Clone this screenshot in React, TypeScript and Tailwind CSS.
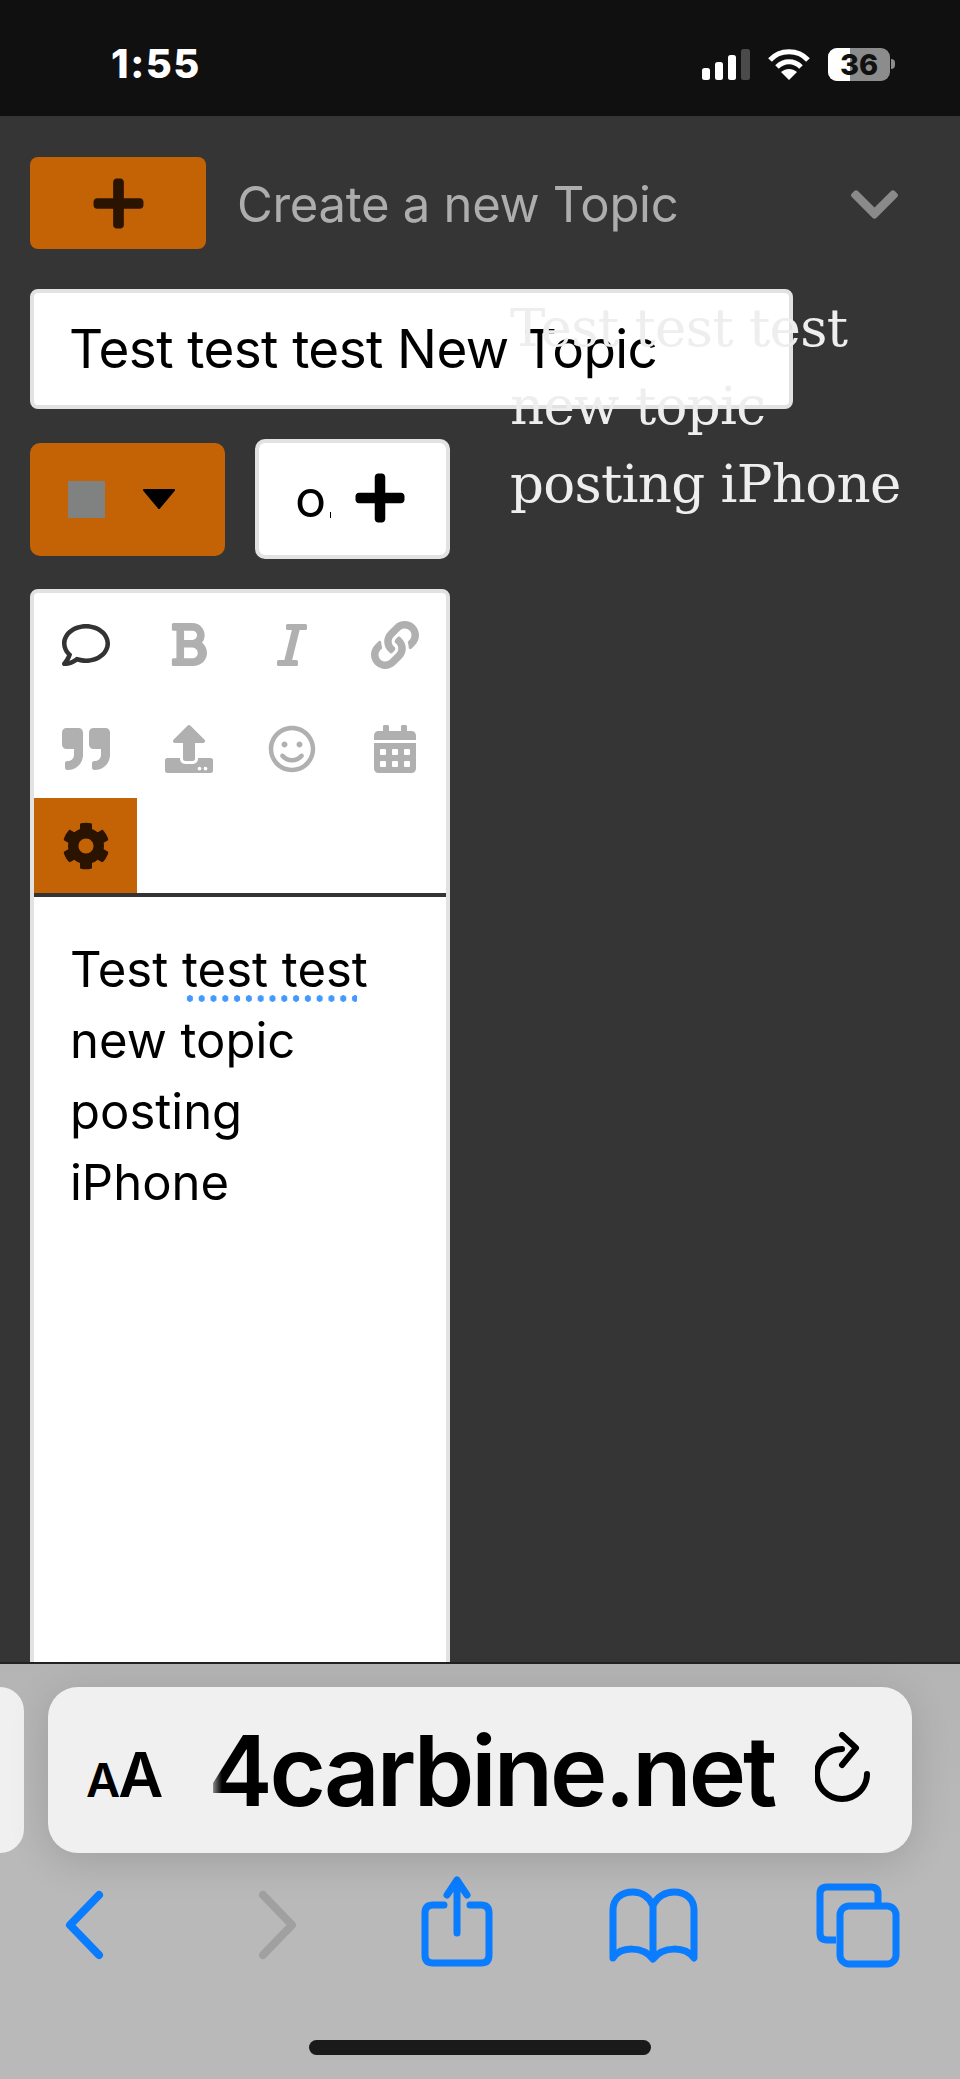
import {
  FaBold,
  FaCalendarAlt,
  FaChevronDown,
  FaCog,
  FaItalic,
  FaLink,
  FaPlus,
  FaQuoteRight,
  FaRegComment,
  FaRegSmile,
  FaUpload,
} from 'react-icons/fa'

function StatusBar() {
  return (
    <div className="flex h-[116px] shrink-0 items-center bg-[#101010] pl-[111px] pr-[65px] font-['Inter',sans-serif] text-white">
      <div className="mt-[12px] text-[40px] font-extrabold leading-none tracking-[1.5px]">1:55</div>
      <div className="ml-auto mt-[12px] flex items-center">
        <svg width="48" height="31" viewBox="0 0 48 31">
          <rect x="0" y="19" width="8" height="12" rx="2.5" fill="#fff" />
          <rect x="13" y="13" width="8" height="18" rx="2.5" fill="#fff" />
          <rect x="26" y="6" width="8" height="25" rx="2.5" fill="#fff" />
          <rect x="39" y="0" width="9" height="31" rx="2.5" fill="#4a4a4a" />
        </svg>
        <svg width="42" height="31" viewBox="0 0 42 31" fill="none" stroke="#fff" strokeWidth="5" className="ml-[18px]">
          <path d="M2 11 C12 0 30 0 40 11" />
          <path d="M9 18 C16 11 26 11 33 18" />
          <path d="M21 31 L13 23 C18 19 24 19 29 23 Z" fill="#fff" stroke="none" />
        </svg>
        <div className="relative ml-[18px] flex h-[33px] w-[62px] items-center justify-center overflow-hidden rounded-[9px] bg-[#8c8c8c]">
          <div className="absolute inset-y-0 left-0 w-[22px] bg-white" />
          <span className="relative text-[29px] font-extrabold leading-none text-[#111]">36</span>
        </div>
        <div className="ml-[1px] h-[10px] w-[4px] rounded-r-full bg-[#8c8c8c]" />
      </div>
    </div>
  )
}

function Header() {
  return (
    <div className="flex items-center">
      <div className="flex h-[92px] w-[176px] items-center justify-center rounded-[8px] bg-[#c46305]">
        <FaPlus size={57} className="text-[#2a1400]" />
      </div>
      <div className="ml-[31px] mt-[2px] font-['Inter',sans-serif] text-[49px] leading-none tracking-[-0.3px] text-[#adadad]">Create a new Topic</div>
      <FaChevronDown size={55} className="ml-auto mr-[28px] mt-[2px] text-[#8a8a8a]" />
    </div>
  )
}

function Toolbar() {
  return (
    <div className="grid grid-cols-4 text-[#b0b0b0]">
      <div className="flex h-[103px] items-center justify-center text-[#333]">
        <FaRegComment size={48} />
      </div>
      <div className="flex h-[103px] items-center justify-center">
        <FaBold size={49} />
      </div>
      <div className="flex h-[103px] items-center justify-center">
        <FaItalic size={48} />
      </div>
      <div className="flex h-[103px] items-center justify-center">
        <FaLink size={48} />
      </div>
      <div className="flex h-[102px] items-center justify-center pt-[3px]">
        <FaQuoteRight size={48} />
      </div>
      <div className="flex h-[102px] items-center justify-center pt-[3px]">
        <FaUpload size={48} />
      </div>
      <div className="flex h-[102px] items-center justify-center pt-[3px]">
        <FaRegSmile size={48} />
      </div>
      <div className="flex h-[102px] items-center justify-center pt-[3px]">
        <FaCalendarAlt size={48} />
      </div>
      <div className="flex h-[95px] items-center justify-center bg-[#c46305] text-[#2a1400]">
        <FaCog size={48} />
      </div>
    </div>
  )
}

function Editor() {
  return (
    <div className="mt-[30px] h-[1200px] w-[420px] shrink-0 rounded-[8px] border-[4px] border-[#e2e2e2] bg-white">
      <Toolbar />
      <div className="h-[4px] bg-[#333]" />
      <div className="pl-[36px] pr-[30px] pt-[37px] font-['Inter',sans-serif] text-[49px] leading-[71px] text-black">
        Test{' '}
        <span className="relative">
          test test
          <span className="absolute bottom-[-3px] left-[2px] h-[7px] w-[173px] bg-[radial-gradient(circle,#4499ff_3px,transparent_3.5px)] bg-[length:11.8px_7px]" />
        </span>
        <br />new topic
        <br />posting
        <br />iPhone
      </div>
    </div>
  )
}

function BottomBar() {
  return (
    <div className="relative flex h-[417px] shrink-0 flex-col border-t-2 border-[#222] bg-[#b9b9b9] font-['Inter',sans-serif]">
      <div className="flex items-center bg-gradient-to-b from-[#b4b4b4] to-[#b9b9b9] pt-[23px]">
        <div className="h-[166px] w-[24px] rounded-r-[24px] bg-[#f0f0f0]" />
        <div className="relative ml-[24px] flex h-[166px] w-[864px] items-center rounded-[30px] bg-[#f0f0f0] pl-[38px] text-black shadow-[0_8px_40px_rgba(0,0,0,0.14)]">
          <span className="mt-[10px] w-[122px] shrink-0 whitespace-nowrap font-semibold leading-none">
            <span className="text-[47px]">A</span>
            <span className="ml-[-2px] text-[62px]">A</span>
          </span>
          <span className="whitespace-nowrap text-[97px] font-semibold leading-none tracking-[-3px]">4carbine.net</span>
          <div className="absolute bottom-0 left-[158px] top-0 w-[16px] bg-gradient-to-r from-[#f0f0f0] to-transparent" />
          <svg width="56" height="70" viewBox="0 0 56 70" fill="none" stroke="#000" strokeWidth="6" strokeLinecap="round" strokeLinejoin="round" className="absolute left-[767px] top-[45px]">
            <path d="M27 17 A25 25 0 1 0 52 42" />
            <path d="M27 3 L41 16 L27 33" />
          </svg>
        </div>
      </div>
      <div className="flex items-start pl-[64px] pt-[23px]">
        <svg width="41" height="70" viewBox="0 0 41 70" fill="none" stroke="#0a7cff" strokeWidth="8" strokeLinecap="round" strokeLinejoin="round" className="mt-[14px]">
          <path d="M35 5 L6 35 L35 65" />
        </svg>
        <svg width="41" height="70" viewBox="0 0 41 70" fill="none" stroke="#a0a0a0" strokeWidth="8" strokeLinecap="round" strokeLinejoin="round" className="ml-[152px] mt-[14px]">
          <path d="M6 5 L35 35 L6 65" />
        </svg>
        <svg width="72" height="91" viewBox="0 0 72 91" fill="none" stroke="#0a7cff" strokeWidth="7" strokeLinecap="round" strokeLinejoin="round" className="ml-[123px]">
          <path d="M23 29 H12 Q4 29 4 37 V79 Q4 87 12 87 H60 Q68 87 68 79 V37 Q68 29 60 29 H49" />
          <path d="M36 57 V4 M26 19 L36 4 L46 19" />
        </svg>
        <svg width="89" height="75" viewBox="0 0 89 75" fill="none" stroke="#0a7cff" strokeWidth="7" strokeLinecap="round" strokeLinejoin="round" className="ml-[116px] mt-[12px]">
          <path d="M44 18 C40 8 32 4 24 4 C12 4 4 11 4 22 V70 C12 58 34 58 44 71 C54 58 76 58 85 70 V22 C85 11 77 4 65 4 C57 4 48 8 44 18 Z M44 18 V68" />
        </svg>
        <svg width="84" height="85" viewBox="0 0 84 85" fill="none" stroke="#0a7cff" strokeWidth="7" strokeLinejoin="round" className="ml-[118px] mt-[7px]">
          <path d="M20 57 H11 Q4 57 4 50 V11 Q4 4 11 4 H55 Q62 4 62 11 V22" />
          <rect x="24" y="23" width="56" height="58" rx="9" />
        </svg>
      </div>
      <div className="absolute bottom-[24px] left-[309px] h-[15px] w-[342px] rounded-full bg-[#1a1a1a]" />
    </div>
  )
}

export default function App() {
  return (
    <div className="flex h-[2079px] w-[960px] flex-col overflow-hidden bg-[#353535]">
      <StatusBar />
      <div className="flex min-h-0 flex-1 flex-col overflow-hidden px-[30px] pt-[41px]">
        <Header />
        <div className="relative mt-[40px] flex">
          <div className="flex h-[120px] w-[763px] items-center rounded-[8px] border-[4px] border-[#e2e2e2] bg-white pl-[35px] pt-[2px] font-['Inter',sans-serif] text-[53px] tracking-[-0.6px] text-black">
            Test test test New Topic
          </div>
          {/* the preview really does sit over the input in this layout */}
          <div className="absolute left-[480px] top-[0px] w-[450px] font-['DejaVu_Serif',serif] text-[53px] leading-[78px] tracking-[-0.7px] text-[#eeeeee]">
            Test test test
            <br />new topic
            <br />posting iPhone
          </div>
        </div>
        <div className="mt-[30px] flex items-center gap-[30px]">
          <div className="flex h-[113px] w-[195px] items-center rounded-[10px] bg-[#c46305] pl-[38px]">
            <div className="h-[37px] w-[37px] bg-[#808281]" />
            <svg width="34" height="20" viewBox="0 0 34 20" className="ml-[37px]">
              <path d="M2 1 H32 L17 19 Z" fill="#000" stroke="#000" strokeWidth="2" strokeLinejoin="round" />
            </svg>
          </div>
          <div className="relative flex h-[120px] w-[195px] items-center rounded-[10px] border-[4px] border-[#e2e2e2] bg-white pl-[36px]">
            <span className="w-[57px] font-['Inter',sans-serif] text-[52px] leading-none text-black">o</span>
            <div className="absolute left-[71px] top-[69px] h-[6px] w-[1px] bg-black" />
            <FaPlus size={56} className="mt-[-2px] text-black" />
          </div>
        </div>
        <Editor />
      </div>
      <BottomBar />
    </div>
  )
}
